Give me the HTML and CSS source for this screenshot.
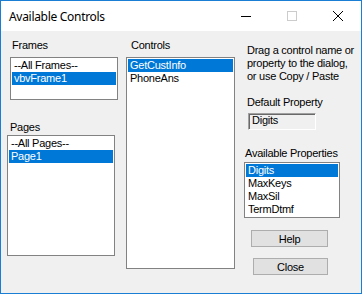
FILE: index.html
```html
<!DOCTYPE html>
<html lang="en">

<head>
    <title>Available Controls</title>
    <meta charset="utf-8">
    <link rel="stylesheet" href="styles.css">
</head>

<body>

    <div class="window">
        <div class="titlebar">
            <span class="title">Available Controls</span>
            <div class="caption">
                <div class="cap">
                    <svg width="10" height="10" viewBox="0 0 10 10"><path d="M0 5.5h10" stroke="#000" stroke-width="1"/></svg>
                </div>
                <div class="cap">
                    <svg width="10" height="10" viewBox="0 0 10 10"><rect x="0.5" y="0.5" width="9" height="9" fill="none" stroke="#cccccc"/></svg>
                </div>
                <div class="cap">
                    <svg width="10" height="10" viewBox="0 0 10 10"><path d="M0 0L10 10M10 0L0 10" stroke="#000" stroke-width="1"/></svg>
                </div>
            </div>
        </div>

        <div class="client">

            <div class="col col-frames">
                <div class="lbl frames-lbl">Frames</div>
                <div class="listbox frames-list">
                    <div class="item">--All Frames--</div>
                    <div class="item sel">vbvFrame1</div>
                </div>
                <div class="lbl pages-lbl">Pages</div>
                <div class="listbox pages-list">
                    <div class="item">--All Pages--</div>
                    <div class="item sel">Page1</div>
                </div>
            </div>

            <div class="col col-controls">
                <div class="lbl controls-lbl">Controls</div>
                <div class="listbox controls-list">
                    <div class="item sel">GetCustInfo</div>
                    <div class="item">PhoneAns</div>
                </div>
            </div>

            <div class="col col-props">
                <p class="hint">Drag a control name or<br>property to the dialog,<br>or use Copy / Paste</p>
                <div class="lbl default-lbl">Default Property</div>
                <div class="textbox">Digits</div>
                <div class="lbl avail-lbl">Available Properties</div>
                <div class="listbox props-list">
                    <div class="item sel">Digits</div>
                    <div class="item">MaxKeys</div>
                    <div class="item">MaxSil</div>
                    <div class="item">TermDtmf</div>
                </div>
                <button class="btn help-btn">Help</button>
                <button class="btn close-btn">Close</button>
            </div>

        </div>
    </div>

</body>

</html>
```

FILE: styles.css
```css
html,
body {
    margin: 0;
    background-color: #ffffff;
}

.window {
    width: 360px;
    height: 292px;
    border: 1px solid #1a7fd4;
    display: flex;
    flex-direction: column;
    font-family: "Liberation Sans", Arial, sans-serif;
    font-size: 11px;
    letter-spacing: -0.25px;
    color: #000000;
}

/* title bar */
.titlebar {
    height: 30px;
    background-color: #ffffff;
    display: flex;
    align-items: center;
}

.title {
    padding-left: 8px;
    font-family: "Noto Sans", sans-serif;
    font-size: 12px;
    letter-spacing: -0.3px;
}

.caption {
    margin-left: auto;
    display: flex;
    height: 30px;
}

.cap {
    width: 46px;
    display: flex;
    align-items: center;
    justify-content: center;
}

/* dialog body */
.client {
    flex: 1;
    background-color: #f0f0f0;
    display: flex;
    padding-top: 8px;
}

.col {
    display: flex;
    flex-direction: column;
    align-items: flex-start;
}

.lbl {
    line-height: 13px;
    height: 13px;
}

.listbox {
    box-sizing: border-box;
    background-color: #ffffff;
    border: 1px solid #828282;
    padding: 1px;
}

.item {
    height: 13px;
    line-height: 13px;
    padding-left: 2px;
    white-space: nowrap;
}

.sel {
    background-color: #0078d7;
    color: #ffffff;
}

/* left column */
.frames-lbl {
    margin-left: 11px;
}

.frames-list {
    margin-top: 5px;
    margin-left: 9px;
    width: 108px;
    height: 43px;
}

.pages-lbl {
    margin-top: 21px;
    margin-left: 9px;
}

.pages-list {
    margin-top: 1px;
    margin-left: 6px;
    width: 108px;
    height: 121px;
}

/* middle column */
.col-controls {
    margin-left: 8px;
}

.controls-lbl {
    margin-left: 5px;
}

.controls-list {
    margin-top: 5px;
    width: 109px;
    height: 212px;
}

/* right column */
.col-props {
    margin-left: 1px;
}

.hint {
    margin: 5px 0 0 11px;
    line-height: 13px;
}

.default-lbl {
    margin-top: 13px;
    margin-left: 11px;
}

.textbox {
    box-sizing: border-box;
    margin-top: 4px;
    margin-left: 12px;
    width: 68px;
    height: 17px;
    line-height: 13px;
    padding-left: 3px;
    background-color: #f0f0f0;
    border: 1px solid;
    border-color: #a0a0a0 #ffffff #ffffff #a0a0a0;
    box-shadow: inset 1px 1px 0 #696969;
}

.avail-lbl {
    margin-top: 17px;
    margin-left: 9px;
}

.props-list {
    margin-top: 2px;
    margin-left: 8px;
    width: 96px;
    height: 56px;
}

.btn {
    box-sizing: border-box;
    height: 17px;
    padding: 0;
    background-color: #e1e1e1;
    border: 1px solid #adadad;
    font-family: "Liberation Sans", Arial, sans-serif;
    font-size: 11px;
    letter-spacing: -0.25px;
    color: #000000;
}

.help-btn {
    margin-top: 12px;
    margin-left: 15px;
    width: 77px;
}

.close-btn {
    margin-top: 11px;
    margin-left: 17px;
    width: 75px;
}
```
